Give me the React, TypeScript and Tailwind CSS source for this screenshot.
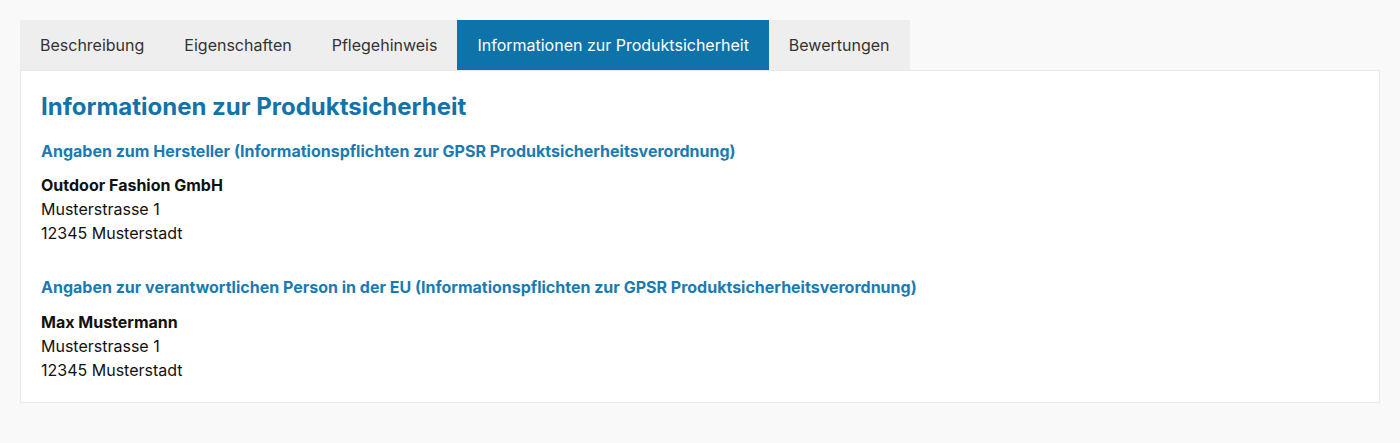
import React from "react";

const tabs = ["Beschreibung", "Eigenschaften", "Pflegehinweis", "Informationen zur Produktsicherheit", "Bewertungen"];

export default function App() {
  return (
    <div className="min-h-[443px] bg-[#f9f9f9] p-5 text-[#111]" style={{ fontFamily: "Inter, 'Noto Sans', sans-serif" }}>
      <div className="flex">
        {tabs.map((t, i) => (
          <div
            key={t}
            className={
              i === 3
                ? "h-[50px] px-5 flex items-center text-[16px] bg-[#0e73a8] text-white"
                : "h-[50px] px-5 flex items-center text-[16px] bg-[#eeeeee] text-[#333]"
            }
          >
            {t}
          </div>
        ))}
      </div>
      <div className="bg-white border border-[#e8e8e8] px-5 pt-5 pb-5">
        <h1 className="text-[24px] leading-[32px] font-bold text-[#1273a8]">Informationen zur Produktsicherheit</h1>
        <h2 className="mt-4 text-[16px] leading-[24px] font-bold text-[#1a7bb3]">
          Angaben zum Hersteller (Informationspflichten zur GPSR Produktsicherheitsverordnung)
        </h2>
        <div className="mt-[10px] text-[16px] leading-[24px]">
          <div className="font-bold">Outdoor Fashion GmbH</div>
          <div>Musterstrasse 1</div>
          <div>12345 Musterstadt</div>
        </div>
        <h2 className="mt-[30px] text-[16px] leading-[24px] font-bold text-[#1a7bb3]">
          Angaben zur verantwortlichen Person in der EU (Informationspflichten zur GPSR Produktsicherheitsverordnung)
        </h2>
        <div className="mt-[11px] text-[16px] leading-[24px]">
          <div className="font-bold">Max Mustermann</div>
          <div>Musterstrasse 1</div>
          <div>12345 Musterstadt</div>
        </div>
      </div>
    </div>
  );
}
